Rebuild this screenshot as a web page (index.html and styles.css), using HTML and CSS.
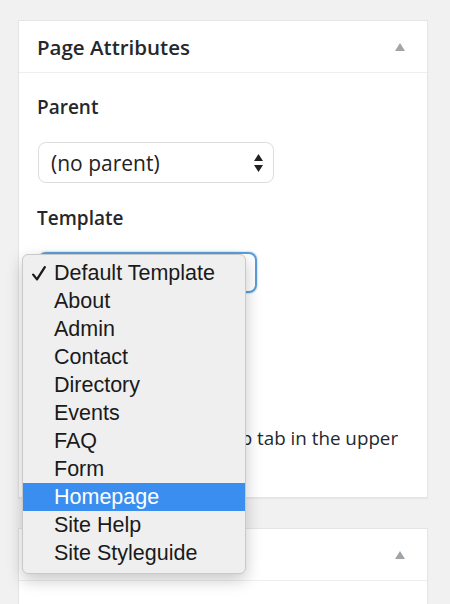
FILE: index.html
```html
<!DOCTYPE html>
<html lang="en">
  <head>
    <meta charset="UTF-8" />
    <meta name="viewport" content="width=device-width, initial-scale=1.0" />
    <title>Page Attributes</title>
    <link rel="stylesheet" href="styles.css">
  </head>
  <body>
    <div class="postbox">
      <div class="hndle">
        <span>Page Attributes</span>
        <svg class="toggle" width="10" height="8" viewBox="0 0 10 8"><path d="M5 0 L10 8 L0 8 Z" fill="#a0a5aa"/></svg>
      </div>
      <div class="inside">
        <p class="label">Parent</p>
        <div class="select">
          <span>(no parent)</span>
          <svg class="updown" width="9" height="18" viewBox="0 0 9 18"><path d="M4.5 0 L9 7 L0 7 Z M4.5 18 L9 11 L0 11 Z" fill="#222"/></svg>
        </div>
        <p class="label">Template</p>
        <div class="select template"></div>
        <p class="help">Need help? Use the Help tab in the upper right of your screen.</p>
      </div>
    </div>

    <div class="postbox second">
      <div class="hndle">
        <span>Featured Image</span>
        <svg class="toggle" width="10" height="8" viewBox="0 0 10 8"><path d="M5 0 L10 8 L0 8 Z" fill="#a0a5aa"/></svg>
      </div>
      <div class="inside"></div>
    </div>

    <ul class="menu">
      <li class="checked">
        <svg class="check" width="14" height="15" viewBox="0 0 14 15"><path d="M1.2 8.6 L5 13.4 L12.8 1.2" fill="none" stroke="#1a1a1a" stroke-width="2.3" stroke-linecap="round" stroke-linejoin="round"/></svg>
        Default Template
      </li>
      <li>About</li>
      <li>Admin</li>
      <li>Contact</li>
      <li>Directory</li>
      <li>Events</li>
      <li>FAQ</li>
      <li>Form</li>
      <li class="active">Homepage</li>
      <li>Site Help</li>
      <li>Site Styleguide</li>
    </ul>
  </body>
</html>
```

FILE: styles.css
```css
body {
  margin: 0;
  padding: 20px 22px 0 18px;
  background: #f1f1f1;
  font-family: "Open Sans", sans-serif;
  color: #23282d;
  height: 604px;
  box-sizing: border-box;
  overflow: hidden;
  position: relative;
}
.postbox {
  background: #fff;
  border: 1px solid #e5e5e5;
  box-shadow: 0 1px 1px rgba(0, 0, 0, 0.04);
}
.postbox.second {
  margin-top: 30px;
  height: 120px;
}
.hndle {
  display: flex;
  align-items: center;
  justify-content: space-between;
  height: 51px;
  padding: 0 22px 0 18px;
  border-bottom: 1px solid #eee;
  font-size: 20.5px;
  font-weight: 600;
}
.inside {
  padding: 15px 18px 17px;
}
.label {
  margin: 0;
  font-size: 19px;
  font-weight: 600;
  line-height: 38px;
}
.select {
  display: flex;
  align-items: center;
  justify-content: space-between;
  box-sizing: border-box;
  width: 236px;
  height: 41px;
  margin: 16px 0 16px 1px;
  padding: 0 10px 0 12px;
  border: 1px solid #ddd;
  border-radius: 8px;
  font-size: 21px;
  color: #222;
}
.select.template {
  width: 219px;
  margin-top: 15px;
  border: 2px solid #5b9dd9;
  box-shadow: 0 0 2px rgba(30, 140, 190, 0.6);
}
.help {
  margin: 131px 0 0;
  font-size: 18.8px;
  line-height: 28px;
}
.menu {
  position: absolute;
  left: 22px;
  top: 254px;
  width: 224px;
  box-sizing: border-box;
  margin: 0;
  padding: 4px 0 6px;
  list-style: none;
  background: #efefef;
  border: 1px solid #c9c9c9;
  border-radius: 6px;
  box-shadow: 0 6px 16px rgba(0, 0, 0, 0.22);
  font-family: "Liberation Sans", Arial, sans-serif;
  font-size: 21.5px;
  color: #1a1a1a;
}
.menu li {
  height: 28px;
  line-height: 28px;
  padding-left: 31px;
  position: relative;
}
.check {
  position: absolute;
  left: 9px;
  top: 7px;
}
.menu li.active {
  background: #3a8ef0;
  color: #fff;
}
```
